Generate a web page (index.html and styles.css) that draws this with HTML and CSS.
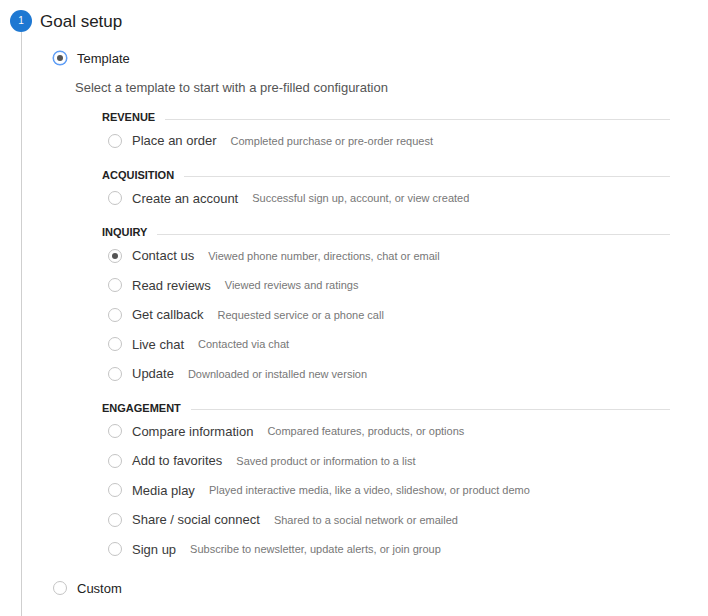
FILE: index.html
```html
<!DOCTYPE html>
<html>
<head>
<meta charset="utf-8">
<link rel="stylesheet" href="styles.css">
</head>
<body>
<div class="step">
  <div class="rail">
    <div class="badge">1</div>
    <div class="line"></div>
  </div>
  <div class="content">
    <div class="title">Goal setup</div>
    <label class="opt top">
      <span class="radio checked focus"></span>
      <span class="opt-label">Template</span>
    </label>
    <p class="hint">Select a template to start with a pre-filled configuration</p>
    <div class="sections">
      <div class="section">
        <div class="sec-head"><span>REVENUE</span><i class="rule"></i></div>
        <div class="row"><span class="radio"></span><span class="lbl">Place an order</span><span class="desc">Completed purchase or pre-order request</span></div>
      </div>
      <div class="section">
        <div class="sec-head"><span>ACQUISITION</span><i class="rule"></i></div>
        <div class="row"><span class="radio"></span><span class="lbl">Create an account</span><span class="desc">Successful sign up, account, or view created</span></div>
      </div>
      <div class="section">
        <div class="sec-head"><span>INQUIRY</span><i class="rule"></i></div>
        <div class="row"><span class="radio checked"></span><span class="lbl">Contact us</span><span class="desc">Viewed phone number, directions, chat or email</span></div>
        <div class="row"><span class="radio"></span><span class="lbl">Read reviews</span><span class="desc">Viewed reviews and ratings</span></div>
        <div class="row"><span class="radio"></span><span class="lbl">Get callback</span><span class="desc">Requested service or a phone call</span></div>
        <div class="row"><span class="radio"></span><span class="lbl">Live chat</span><span class="desc">Contacted via chat</span></div>
        <div class="row"><span class="radio"></span><span class="lbl">Update</span><span class="desc">Downloaded or installed new version</span></div>
      </div>
      <div class="section">
        <div class="sec-head"><span>ENGAGEMENT</span><i class="rule"></i></div>
        <div class="row"><span class="radio"></span><span class="lbl">Compare information</span><span class="desc">Compared features, products, or options</span></div>
        <div class="row"><span class="radio"></span><span class="lbl">Add to favorites</span><span class="desc">Saved product or information to a list</span></div>
        <div class="row"><span class="radio"></span><span class="lbl">Media play</span><span class="desc">Played interactive media, like a video, slideshow, or product demo</span></div>
        <div class="row"><span class="radio"></span><span class="lbl">Share / social connect</span><span class="desc">Shared to a social network or emailed</span></div>
        <div class="row"><span class="radio"></span><span class="lbl">Sign up</span><span class="desc">Subscribe to newsletter, update alerts, or join group</span></div>
      </div>
    </div>
    <label class="opt custom">
      <span class="radio"></span>
      <span class="opt-label">Custom</span>
    </label>
  </div>
</div>
</body>
</html>
```
FILE: styles.css
```css
* { box-sizing: border-box; }
html, body { margin: 0; padding: 0; background: #fff; }
body {
  font-family: "Liberation Sans", Arial, sans-serif;
  color: #333;
  width: 708px;
  height: 616px;
  overflow: hidden;
}
.step {
  display: flex;
  min-height: 616px;
}
.rail {
  width: 42px;
  flex: none;
  display: flex;
  flex-direction: column;
  align-items: center;
  padding-top: 10px;
}
.badge {
  width: 22px;
  height: 22px;
  border-radius: 50%;
  background: #1e78d2;
  color: #fff;
  font-size: 10px;
  line-height: 22px;
  text-align: center;
  flex: none;
}
.line {
  flex: 1;
  width: 1px;
  background: #cfcfcf;
}
.content {
  flex: 1;
  margin-left: -2px;
  padding-top: 11px;
}
.title {
  font-size: 17px;
  line-height: 22px;
  height: 22px;
  color: #222;
}
.opt {
  display: flex;
  align-items: center;
  height: 28px;
  margin-left: 13px;
}
.opt.top { margin-top: 11px; }
.opt.custom { margin-top: 11px; }
.opt-label {
  font-size: 13px;
  color: #222;
  margin-left: 10px;
}
.radio {
  width: 14px;
  height: 14px;
  border-radius: 50%;
  border: 1px solid #c4c4c4;
  background: #fff;
  flex: none;
  display: flex;
  align-items: center;
  justify-content: center;
}
.radio.checked::after {
  content: "";
  width: 6px;
  height: 6px;
  border-radius: 50%;
  background: #555;
}
.radio.focus {
  border-color: #5a9bf6;
  box-shadow: 0 0 0 0.5px #5a9bf6;
}
.hint {
  margin: 8px 0 0 35px;
  font-size: 13px;
  line-height: 16px;
  color: #555;
}
.sections {
  margin: 13px 0 0 62px;
  width: 568px;
}
.section + .section { margin-top: 12px; }
.sec-head {
  display: flex;
  align-items: center;
  height: 16px;
  font-size: 11px;
  font-weight: bold;
  color: #222;
}
.rule {
  flex: 1;
  height: 1px;
  background: #e0e0e0;
  margin-left: 10px;
  margin-top: 4px;
}
.row {
  display: flex;
  align-items: center;
  height: 29.5px;
  padding-top: 2px;
  padding-left: 6px;
}
.lbl {
  font-size: 13px;
  color: #3a3a3a;
  margin-left: 10px;
}
.desc {
  font-size: 11px;
  color: #777;
  margin-left: 14px;
}
```
